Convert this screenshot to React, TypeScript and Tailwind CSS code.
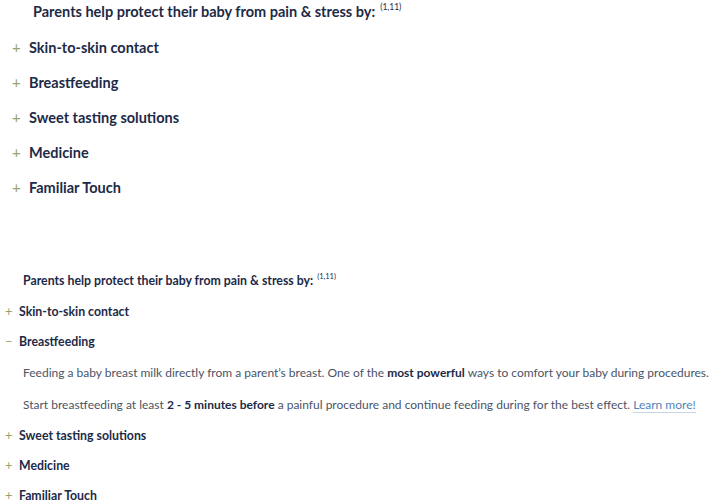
import React from "react";

const items = [
  "Skin-to-skin contact",
  "Breastfeeding",
  "Sweet tasting solutions",
  "Medicine",
  "Familiar Touch",
];

export default function App() {
  return (
    <div
      className="w-[709px] h-[502px] overflow-hidden bg-white text-[#1d2a47] whitespace-nowrap"
      style={{ fontFamily: "Lato, 'Noto Sans', sans-serif" }}
    >
      {/* Top version */}
      <div className="pt-[2px]">
        <div className="pl-[33px] h-[20px] flex items-center text-[14.5px] font-bold">
          Parents help protect their baby from pain &amp; stress by:
          <sup className="ml-[5px] text-[8.5px] font-normal -top-[5px] relative">(1,11)</sup>
        </div>
        <div className="mt-[8px] flex flex-col">
          {items.map((t) => (
            <div key={t} className="h-[35px] flex items-center pl-[12px] text-[14.5px] font-bold">
              <span className="w-[17px] text-[#9aa36f] font-normal text-[15px]">+</span>
              {t}
            </div>
          ))}
        </div>
      </div>

      {/* Bottom version */}
      <div className="mt-[67px]">
        <div className="pl-[23px] h-[18px] flex items-center text-[12.3px] font-bold">
          Parents help protect their baby from pain &amp; stress by:
          <sup className="ml-[4px] text-[7.5px] font-normal -top-[4px] relative">(1,11)</sup>
        </div>
        <div className="mt-[7px] flex flex-col">
          <div className="h-[30px] flex items-center pl-[5px] text-[12.3px] font-bold">
            <span className="w-[14px] text-[#9aa36f] font-normal text-[13px]">+</span>
            Skin-to-skin contact
          </div>
          <div className="h-[30px] flex items-center pl-[5px] text-[12.3px] font-bold">
            <span className="w-[14px] text-[#9aa36f] font-normal text-[13px]">–</span>
            Breastfeeding
          </div>
          <div className="pl-[23px] text-[12px] text-[#4a5466] flex flex-col">
            <div className="h-[32px] flex items-center">
              <span>
                Feeding a baby breast milk directly from a parent’s breast. One of the{" "}
                <b className="text-[#1d2a47]">most powerful</b> ways to comfort your baby during procedures.
              </span>
            </div>
            <div className="h-[32px] flex items-center">
              <span>
                Start breastfeeding at least <b className="text-[#1d2a47]">2 - 5 minutes before</b> a painful
                procedure and continue feeding during for the best effect.{" "}
                <a className="text-[#4f84b8] border-b border-[#c7d6e6]">Learn more!</a>
              </span>
            </div>
          </div>
          {items.slice(2).map((t) => (
            <div key={t} className="h-[30px] flex items-center pl-[5px] text-[12.3px] font-bold">
              <span className="w-[14px] text-[#9aa36f] font-normal text-[13px]">+</span>
              {t}
            </div>
          ))}
        </div>
      </div>
    </div>
  );
}
